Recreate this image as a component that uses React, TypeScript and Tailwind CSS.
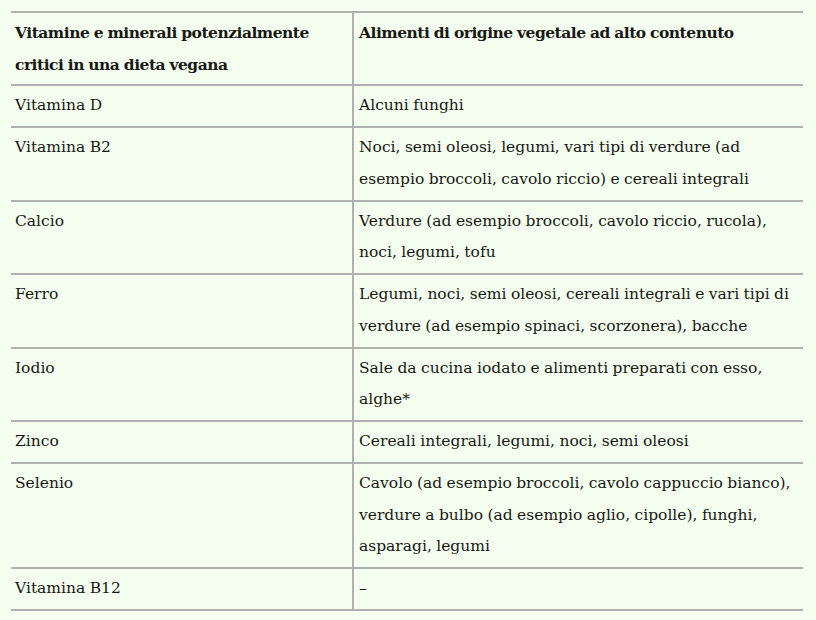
const rows: [string, string][] = [
  ['Vitamina D', 'Alcuni funghi'],
  ['Vitamina B2', 'Noci, semi oleosi, legumi, vari tipi di verdure (ad esempio broccoli, cavolo riccio) e cereali integrali'],
  ['Calcio', 'Verdure (ad esempio broccoli, cavolo riccio, rucola), noci, legumi, tofu'],
  ['Ferro', 'Legumi, noci, semi oleosi, cereali integrali e vari tipi di verdure (ad esempio spinaci, scorzonera), bacche'],
  ['Iodio', 'Sale da cucina iodato e alimenti preparati con esso, alghe*'],
  ['Zinco', 'Cereali integrali, legumi, noci, semi oleosi'],
  ['Selenio', 'Cavolo (ad esempio broccoli, cavolo cappuccio bianco), verdure a bulbo (ad esempio aglio, cipolle), funghi, asparagi, legumi'],
  ['Vitamina B12', '–'],
]

export default function App() {
  return (
    <div
      className="min-h-[620px] w-[816px] bg-[#f4fff0] pl-[11px] pt-[11px] text-[#1a1815]"
      style={{ fontFamily: '"DejaVu Serif", serif' }}
    >
      <table className="w-[792px] table-fixed border-collapse text-[15.5px] leading-[31.5px] [word-spacing:-0.5px]">
        <colgroup>
          <col className="w-[342px]" />
          <col className="w-[450px]" />
        </colgroup>
        <thead>
          <tr className="border-y-2 border-[#b0b0b0] tracking-[-0.5px]">
            <th className="border-r-2 border-[#b0b0b0] px-1 pt-[4px] pb-[4px] text-left align-top font-bold">
              Vitamine e minerali potenzialmente critici in una dieta vegana
            </th>
            <th className="px-[5px] pt-[4px] pb-[4px] text-left align-top font-bold">
              Alimenti di origine vegetale ad alto contenuto
            </th>
          </tr>
        </thead>
        <tbody>
          {rows.map(([name, foods]) => (
            <tr key={name} className="border-b-2 border-[#b0b0b0]">
              <td className="border-r-2 border-[#b0b0b0] px-1 pt-[4.25px] pb-[4.25px] align-top">{name}</td>
              <td className="px-[5px] pt-[4.25px] pb-[4.25px] align-top">{foods}</td>
            </tr>
          ))}
        </tbody>
      </table>
    </div>
  )
}
